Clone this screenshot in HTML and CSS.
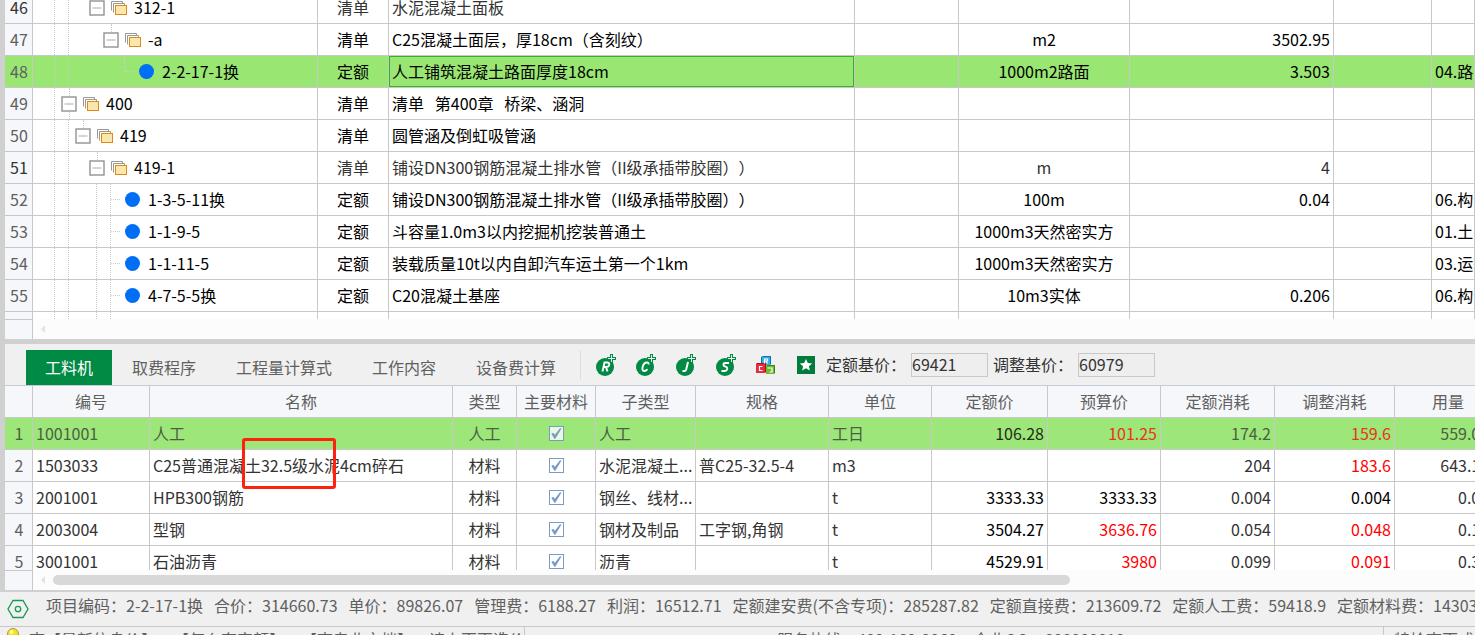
FILE: index.html
```html
<!DOCTYPE html>
<html lang="zh-CN">
<head>
<meta charset="utf-8">
<title>公路造价</title>
<link rel="stylesheet" href="styles.css">
</head>
<body>
<svg class="defs" aria-hidden="true">
  <symbol id="folder" viewBox="0 0 17 14">
    <path d="M1.500 9.500V.5h11v2M3.500 11.500v-9h11v2" fill="none" stroke="#999"/>
    <rect x="5.500" y="4.500" width="11" height="9" fill="#f9e8ae" stroke="#e08a14"/>
  </symbol>
  <symbol id="box" viewBox="0 0 16 16">
    <rect x="1" y="1" width="14" height="14" fill="#fff" stroke="#999" stroke-width="1.500"/>
    <path d="M3.500 8h9" stroke="#aaa"/>
  </symbol>
</svg>
<main class="workspace">
  <section class="bill">
    <div class="bill-rows">
      <table class="grid bill-grid">
        <colgroup><col class="c-no"><col class="c-code"><col class="c-kind"><col class="c-title"><col class="c-gap"><col class="c-unit"><col class="c-qty"><col class="c-extra"><col></colgroup>
        <tbody id="bill-body"></tbody>
      </table>
    </div>
    <div class="scroll"><span class="corner"></span><span class="arrow"></span></div>
  </section>
  <section class="detail">
    <div class="toolbar">
      <nav class="tabs">
        <button class="tab active">工料机</button><button class="tab">取费程序</button><button class="tab">工程量计算式</button><button class="tab">工作内容</button><button class="tab">设备费计算</button>
      </nav>
      <div class="tools">
        <button class="tool" aria-label="R"><svg width="20" height="22" viewBox="0 0 20 22"><circle cx="9" cy="13" r="9" fill="#008a44"/><path d="M6.500 17.500 8.500 8.500h3q2.500.4 1.500 3-.8 1.500-2.800 1.500H7.500m2.500 0 1.500 4.500" fill="none" stroke="#fff" stroke-width="1.900"/><path d="M15.500 0v9M11 4.500h9" stroke="#008a44" stroke-width="3"/><path d="M15.500 1v7M12 4.500h7" stroke="#e4f3ea"/></svg></button>
        <button class="tool" aria-label="C"><svg width="20" height="22" viewBox="0 0 20 22"><circle cx="9" cy="13" r="9" fill="#008a44"/><path d="M12.500 10.500q.5-2-1.500-2-3.500 0-4.500 5-.4 3.500 1.500 3.500 2.500 0 3.200-2" fill="none" stroke="#fff" stroke-width="1.900"/><path d="M15.500 0v9M11 4.500h9" stroke="#008a44" stroke-width="3"/><path d="M15.500 1v7M12 4.500h7" stroke="#e4f3ea"/></svg></button>
        <button class="tool" aria-label="J"><svg width="20" height="22" viewBox="0 0 20 22"><circle cx="9" cy="13" r="9" fill="#008a44"/><path d="m12 8-1.800 7.500q-.7 2.300-3.700 1.200" fill="none" stroke="#fff" stroke-width="2"/><path d="M15.500 0v9M11 4.500h9" stroke="#008a44" stroke-width="3"/><path d="M15.500 1v7M12 4.500h7" stroke="#e4f3ea"/></svg></button>
        <button class="tool" aria-label="S"><svg width="20" height="22" viewBox="0 0 20 22"><circle cx="9" cy="13" r="9" fill="#008a44"/><path d="M13 9H9.300q-2.300.3-1.800 2 .2 1.300 2 1.600 2 .4 1.700 2.400-.5 2-2.200 2H5.500" fill="none" stroke="#fff" stroke-width="1.900"/><path d="M15.500 0v9M11 4.500h9" stroke="#008a44" stroke-width="3"/><path d="M15.500 1v7M12 4.500h7" stroke="#e4f3ea"/></svg></button>
        <button class="tool" aria-label="RCJ"><svg width="20" height="22" viewBox="0 0 20 22"><path d="m5 3 2-1h8v8l-1 1H5z" fill="#0873b8"/><path d="M6 3h8v8H6z" fill="#34aee8"/><path d="m0 10 1-1h9v9l-1 1H0z" fill="#ab0e22"/><path d="M0 10h9v9H0z" fill="#e52b3d"/><path d="m10 12 1-1h8v8l-1 1h-8z" fill="#3c8710"/><path d="M10 12h8v8h-8z" fill="#71b92e"/><path d="M8.500 9.500V5h3v2h-3m1.500 0 1.500 2.500M6.500 12.500h-3v4h3M11.500 14h4.500v4h-2.500" fill="none" stroke="#fff" stroke-width="1.200"/></svg></button>
        <button class="tool" aria-label="收藏"><svg width="18" height="18" viewBox="0 0 18 18"><path fill="#007c3d" d="M0 0h18v18H0z"/><path fill="#fff" d="m9 3 1.800 4 4.400.4-3.300 2.900 1 4.300L9 12.300l-3.900 2.300 1-4.300-3.300-2.900L7.200 7z"/></svg></button>
      </div>
      <div class="prices">
        <label for="base">定额基价：</label><input id="base" value="69421">
        <label for="adjusted">调整基价：</label><input id="adjusted" value="60979">
      </div>
    </div>
    <div class="detail-rows">
      <table class="grid detail-grid">
        <colgroup><col class="c-no"><col class="d-code"><col><col class="d-kind"><col class="d-main"><col class="d-sub"><col class="d-spec"><col class="d-unit"><col class="d-quota"><col class="d-budget"><col class="d-use"><col class="d-adj"><col class="d-amount"></colgroup>
        <thead><tr><th></th><th>编号</th><th>名称</th><th>类型</th><th>主要材料</th><th>子类型</th><th>规格</th><th>单位</th><th>定额价</th><th>预算价</th><th>定额消耗</th><th>调整消耗</th><th>用量</th></tr></thead>
        <tbody id="detail-body"></tbody>
      </table>
    </div>
    <div class="scroll"><span class="corner"></span><span class="arrow"></span><span class="thumb"></span></div>
    <div class="marker"></div>
  </section>
</main>
<footer>
  <div class="summary">
    <svg class="hex" width="22" height="20" viewBox="0 0 22 20" fill="none" stroke="#169a54" stroke-width="1.300"><path d="M6 1.500h10l5 8.500-5 8.500H6L1 10z"/><circle cx="11" cy="10" r="2.700"/></svg>
    <p><span>项目编码：2-2-17-1换</span><span>合价：314660.73</span><span>单价：89826.07</span><span>管理费：6188.27</span><span>利润：16512.71</span><span>定额建安费(不含专项)：285287.82</span><span>定额直接费：213609.72</span><span>定额人工费：59418.9</span><span>定额材料费：143031.5</span></p>
  </div>
  <div class="tips">
    <div class="hint"><svg class="bulb" width="12" height="18" viewBox="0 0 12 18"><circle cx="6" cy="7" r="5.500" fill="#f6df1c" stroke="#a99a50"/><circle cx="4.500" cy="5" r="2" fill="#fffba5"/><path d="M3 13h6v4H3z" fill="#999"/></svg><span>查【最新信息价】</span><span>【怎么套定额】</span><span>【查专业文档】</span><span>请上百百造价</span></div>
    <div class="contact"><span>服务热线：400-160-9060</span><span>企业QQ：800000018</span></div>
    <div class="mode">特检查百式</div>
  </div>
</footer>
<script src="app.js"></script>
</body>
</html>
```
FILE: styles.css
```css
* { box-sizing: border-box; }
body {
  margin: 0;
  height: 100vh;
  overflow: hidden;
  background: #f0f0f0;
  color: #000;
  font: 16px/24px "Noto Sans CJK SC", sans-serif;
  text-spacing-trim: space-all;
}
button, input { font: inherit; }
.defs { position: absolute; width: 0; height: 0; }
.workspace { padding-left: 5px; background: #d0d0d0; }

.grid { border-collapse: separate; border-spacing: 0; table-layout: fixed; width: 100%; background: #fff; }
.grid td, .grid th {
  height: 32px;
  padding: 0 3px 2px;
  border-right: 1px solid #c8c8c8;
  border-bottom: 1px solid #c8c8c8;
  white-space: nowrap;
  overflow: hidden;
  font-weight: 400;
}
.grid .no, .grid th { background: #f5f7fa; color: #606060; }
.grid .no { text-align: center; padding: 0 0 2px 1px; }
.grid .center { text-align: center; }
.grid .right { text-align: right; }
.grid .selected td { background: #99e673; }
.c-no { width: 28px; }

.bill-rows { height: 319px; overflow: hidden; }
.bill-grid { margin-top: -8px; }
.c-code { width: 285px; }
.c-kind { width: 71px; }
.c-title { width: 466px; }
.c-gap { width: 104px; }
.c-unit { width: 171px; }
.c-qty { width: 204px; }
.c-extra { width: 98px; }
.bill-grid .soft td { color: #333; }
.bill-grid .soft .code { color: #000; }
.bill-grid .selected td:nth-child(4) { box-shadow: inset 0 0 0 1px #35b029; }
.bill-grid .code { padding: 0; }
.node { display: flex; height: 31px; align-items: center; }
.node .rail { flex: none; align-self: stretch; width: 14px; border-left: 1px dotted #ccc; }
.node .rail.half { width: 7px; }
.node .rail.blank { border-color: transparent; }
.node .lead { flex: none; width: 21px; }
.node .branch { flex: none; display: flex; align-items: center; align-self: stretch; width: 10px; border-left: 1px dotted #ccc; }
.node .branch::before { content: ""; flex: 1; border-top: 1px dotted #ccc; }
.node .elbow { flex: none; align-self: flex-start; width: 10px; height: 16px; border: dotted #ccc; border-width: 0 0 1px 1px; }
.node .toggle { flex: none; align-self: stretch; display: flex; flex-direction: column; align-items: center; width: 16px; padding: 0; border: 0; background: none; }
.node .toggle::before, .node .toggle.through::after { content: ""; flex: 1; border-left: 1px dotted #ccc; }
.node .toggle::after { content: ""; flex: 1; }
.node .toggle svg { flex: none; }
.node .folder { flex: none; width: 17px; height: 14px; margin: 0 7px 0 5px; }
.node .dot { flex: none; width: 15px; height: 15px; margin: 0 8px 0 5px; border-radius: 50%; background: #006ef5; }
.node .name { padding-bottom: 2px; }

.scroll { display: flex; align-items: center; height: 20px; background: #fcfcfc; }
.corner { width: 28px; height: 20px; background: #f5f7fa; border: solid #c8c8c8; border-width: 1px 1px 0 0; }
.arrow { margin-left: 8px; border: solid transparent; border-width: 4px 4px 4px 0; border-right-color: #e2e2e8; }
.thumb { width: 69.2%; height: 10px; margin-left: 8px; border-radius: 5px; background: #d8d8d8; }

.detail { position: relative; margin-top: 5px; background: #f0f0f0; }
.toolbar { display: flex; align-items: flex-start; height: 42px; border-bottom: 1px solid #c3ccd4; padding: 6px 0 0 21px; }
.tabs { display: flex; }
.tab { height: 35px; padding: 0 20px 2px; border: 0; background: none; color: #606060; white-space: nowrap; }
.tab.active { padding: 0 19px 2px; background: #008a44; color: #fff; }
.tools { display: flex; height: 30px; align-items: center; margin-left: 4px; padding-left: 5px; border-left: 1px solid #ddd; }
.tool { display: flex; justify-content: center; width: 40px; padding: 0; border: 0; background: none; }
.prices { display: flex; height: 30px; align-items: center; gap: 5px; color: #333; white-space: nowrap; }
.prices label { padding-bottom: 2px; }
.prices input { width: 77px; height: 24px; padding: 0 0 2px; border: 1px solid #c8c8c8; background: #eee; color: #333; }

.detail-rows { height: 184px; overflow: hidden; }
.detail-grid { min-width: 1497px; color: #333; }
.d-code { width: 117px; }
.d-kind { width: 64px; }
.d-main { width: 79px; }
.d-sub { width: 100px; }
.d-spec { width: 133px; }
.d-unit { width: 103px; }
.d-quota { width: 116px; }
.d-budget { width: 113px; }
.d-use { width: 114px; }
.d-adj { width: 120px; }
.d-amount { width: 107px; }
.detail-grid .check { padding: 0 3px; }
.detail-grid .dark { color: #000; }
.detail-grid .changed { color: #f00; }
.detail-grid .selected td { background: #9de679; color: #4c5f44; }
.detail-grid .selected .dark { color: #1f2e18; }
.detail-grid .selected .changed { color: #ea3418; }
.tick {
  appearance: none;
  display: block;
  width: 15px;
  height: 15px;
  margin: 0 auto;
  border: 1px solid #7a9cc0;
  background: #fff;
}
.tick::after {
  content: "";
  display: block;
  width: 11px;
  height: 11px;
  margin: 1px;
  background: #7a9cc0;
  clip-path: polygon(8% 52%, 25% 44%, 40% 62%, 86% 2%, 100% 4%, 44% 98%, 34% 98%);
}
.selected .tick { background: #e9f8e2; }
.marker { position: absolute; left: 237px; top: 94px; width: 94px; height: 51px; border: 3px solid #ff2010; border-radius: 3px; }

footer { border-top: 2px solid #d0d0d0; color: #606060; white-space: nowrap; }
.summary { display: flex; align-items: center; height: 34px; padding-left: 7px; }
.hex { flex: none; }
.summary p { display: flex; gap: 11px; margin: 0 0 8px 17px; }
.tips { display: flex; height: 32px; border-top: 1px solid #c8c8c8; }
.tips > div { display: flex; }
.hint { width: 525px; padding-left: 7px; border-right: 1px solid #c8c8c8; }
.hint span + span { margin-left: 16px; }
.bulb { flex: none; margin-right: 10px; }
.contact { flex: 1; gap: 16px; padding-left: 252px; }
.mode { width: 92px; padding-left: 10px; border-left: 1px solid #c8c8c8; }
```
FILE: app.js
```js
const bill = [
  [46, 2, '312-1', '清单', '水泥混凝土面板', '', '', '', 'soft'],
  [47, 3, '-a', '清单', 'C25混凝土面层，厚18cm（含刻纹）', 'm2', '3502.95', ''],
  [48, 4, '2-2-17-1换', '定额', '人工铺筑混凝土路面厚度18cm', '1000m2路面', '3.503', '04.路面', 'selected'],
  [49, 0, '400', '清单', '清单\u00a0\u00a0 第400章\u00a0\u00a0 桥梁、涵洞', '', '', ''],
  [50, 1, '419', '清单', '圆管涵及倒虹吸管涵', '', '', ''],
  [51, 2, '419-1', '清单', '铺设DN300钢筋混凝土排水管（II级承插带胶圈））', 'm', '4', '', 'soft'],
  [52, 3, '1-3-5-11换', '定额', '铺设DN300钢筋混凝土排水管（II级承插带胶圈））', '100m', '0.04', '06.构造物'],
  [53, 3, '1-1-9-5', '定额', '斗容量1.0m3以内挖掘机挖装普通土', '1000m3天然密实方', '', '01.土方'],
  [54, 3, '1-1-11-5', '定额', '装载质量10t以内自卸汽车运土第一个1km', '1000m3天然密实方', '', '03.运输'],
  [55, 3, '4-7-5-5换', '定额', 'C20混凝土基座', '10m3实体', '0.206', '06.构造物'],
  ['', 4, '', '', '', '', '', '']
];

function node(no, level, code, kind) {
  const leaf = kind !== '清单';
  const below = no === '' || no > 51;
  let html = '<span class="lead"></span>';
  for (let i = 0; i <= level; i++) {
    const shown = i < 2 || (below && i > 2);
    const half = !leaf && i === level;
    html += `<span class="rail${shown ? '' : ' blank'}${half ? ' half' : ''}"></span>`;
  }
  if (no === '') return html;
  const name = `<span class="name">${code}</span>`;
  if (leaf) {
    return html + `<span class="${no === 48 ? 'elbow' : 'branch'}"></span><span class="dot"></span>${name}`;
  }
  return html + `<button class="toggle${level === 0 ? ' through' : ''}" aria-label="折叠"><svg width="16" height="16"><use href="#box"/></svg></button><svg class="folder"><use href="#folder"/></svg>${name}`;
}

document.getElementById('bill-body').innerHTML = bill.map(([no, level, code, kind, title, unit, qty, group, cls = '']) =>
  `<tr class="${cls}"><td class="no">${no}</td><td class="code"><div class="node">${node(no, level, code, kind)}</div></td><td class="center">${kind}</td><td>${title}</td><td></td><td class="center">${unit}</td><td class="right">${qty}</td><td></td><td>${group}</td></tr>`
).join('');

const detail = [
  ['1001001', '人工', '人工', '人工', '', '工日', '106.28', '101.25', '174.2', '159.6', '559.079', 'selected'],
  ['1503033', 'C25普通混凝土32.5级水泥4cm碎石', '材料', '水泥混凝土...', '普C25-32.5-4', 'm3', '', '', '204', '183.6', '643.151'],
  ['2001001', 'HPB300钢筋', '材料', '钢丝、线材...', '', 't', '3333.33', '3333.33', '0.004', '0.004', '0.014'],
  ['2003004', '型钢', '材料', '钢材及制品', '工字钢,角钢', 't', '3504.27', '3636.76', '0.054', '0.048', '0.168'],
  ['3001001', '石油沥青', '材料', '沥青', '', 't', '4529.91', '3980', '0.099', '0.091', '0.319']
];

document.getElementById('detail-body').innerHTML = detail.map(([code, name, kind, sub, spec, unit, quota, budget, use, adj, amount, cls = ''], i) =>
  `<tr class="${cls}"><td class="no">${i + 1}</td><td>${code}</td><td>${name}</td><td class="center">${kind}</td><td class="check"><input class="tick" type="checkbox" checked aria-label="主要材料"></td><td>${sub}</td><td>${spec}</td><td>${unit}</td><td class="right dark">${quota}</td><td class="right ${budget === quota ? 'dark' : 'changed'}">${budget}</td><td class="right">${use}</td><td class="right ${adj === use ? 'dark' : 'changed'}">${adj}</td><td class="right">${amount}</td></tr>`
).join('');
```
